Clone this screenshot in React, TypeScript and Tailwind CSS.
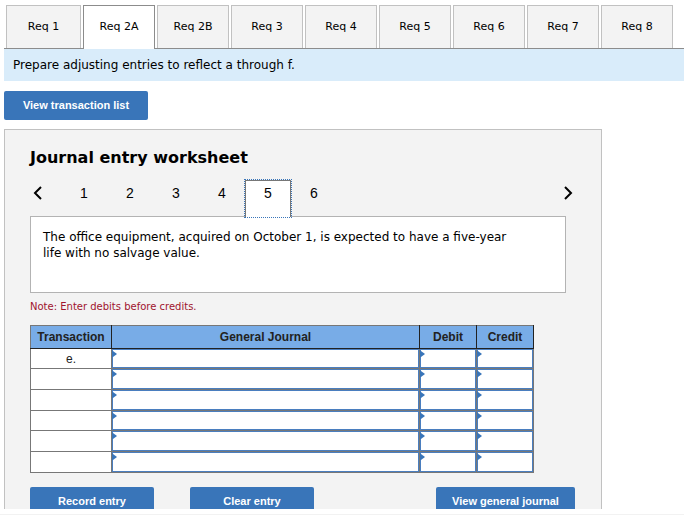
import { useState } from "react";

const REQS = ["Req 1", "Req 2A", "Req 2B", "Req 3", "Req 4", "Req 5", "Req 6", "Req 7", "Req 8"];
const PAGES = [1, 2, 3, 4, 5, 6];
const ROWS = ["e.", "", "", "", "", ""];

const buttonClass =
  "h-[29px] shrink-0 cursor-pointer rounded-xs bg-[#3975b9] text-center font-['Liberation_Sans',Arial,sans-serif] text-[11px] font-bold text-white";

function RequirementTabs() {
  const [active, setActive] = useState("Req 2A");

  return (
    <div role="tablist" className="flex gap-0.5 border-b border-[#8c8c8c] pl-0.5 text-[11px]">
      {REQS.map((req) => (
        <button
          key={req}
          type="button"
          role="tab"
          aria-selected={req === active}
          onClick={() => setActive(req)}
          className={`w-18 shrink-0 cursor-pointer border-x border-t first:w-[75px] ${
            req === active
              ? "-mb-px h-11 border-[#8c8c8c] bg-white pb-px"
              : "h-[43px] border-[#c1c1c1] bg-[#f3f3f3]"
          }`}
        >
          {req}
        </button>
      ))}
    </div>
  );
}

function Arrow({ label, path }: { label: string; path: string }) {
  return (
    <button type="button" aria-label={label} className="flex h-[26px] w-4 cursor-pointer items-center justify-center">
      <svg width="10" height="14" viewBox="0 0 10 14" fill="none" stroke="#000" strokeWidth="2">
        <path d={path} />
      </svg>
    </button>
  );
}

function Pager() {
  const [page, setPage] = useState(5);

  return (
    <div className="flex h-9 max-w-[546px] items-start">
      <Arrow label="Previous entry" path="M8 1 2 7l6 6" />
      <div className="ml-[15px] flex flex-1">
        {PAGES.map((n) => (
          <button
            key={n}
            type="button"
            onClick={() => setPage(n)}
            className={`relative w-[46px] cursor-pointer font-['Liberation_Sans',Arial,sans-serif] text-sm ${
              n === page
                ? "z-10 h-[37px] border-x border-t border-[#777] bg-white pb-3 outline-1 outline-dotted outline-[#3975b9]"
                : "h-9 pb-2.5"
            }`}
          >
            {n}
          </button>
        ))}
      </div>
      <Arrow label="Next entry" path="M2 1l6 6-6 6" />
    </div>
  );
}

function EntryCell({ label }: { label: string }) {
  return (
    <td className="relative h-px border border-[#777] p-0">
      <input
        aria-label={label}
        className="absolute inset-0 h-full w-full border border-[#4a7ebf] bg-white px-2 text-xs outline-none"
      />
      <svg className="pointer-events-none absolute left-0 top-0.5" width="5" height="6" viewBox="0 0 5 6">
        <path d="M0 0h1l4 3-4 3H0z" fill="#3975b9" />
      </svg>
    </td>
  );
}

function JournalTable() {
  return (
    <table className="w-full max-w-[504px] table-fixed border-collapse font-['Liberation_Sans',Arial,sans-serif] text-xs text-[#222]">
      <colgroup>
        <col className="w-[81px]" />
        <col />
        <col className="w-[57px]" />
        <col className="w-[57px]" />
      </colgroup>
      <thead>
        <tr className="h-[23px] bg-[#78ace7]">
          {["Transaction", "General Journal", "Debit", "Credit"].map((head) => (
            <th key={head} className="border border-[#222] border-t-[#777] p-0 font-bold first:border-l-[#777]">
              {head}
            </th>
          ))}
        </tr>
      </thead>
      <tbody>
        {ROWS.map((transaction, i) => (
          <tr key={i} className="h-[21px] bg-white nth-[3n+1]:h-5">
            <td className="border border-[#777] p-0 text-center">{transaction}</td>
            <EntryCell label={`General journal, row ${i + 1}`} />
            <EntryCell label={`Debit, row ${i + 1}`} />
            <EntryCell label={`Credit, row ${i + 1}`} />
          </tr>
        ))}
      </tbody>
    </table>
  );
}

export default function App() {
  return (
    <div className="bg-white font-['DejaVu_Sans',Verdana,sans-serif] text-black">
      <div className="pl-1 pt-[5px]">
        <RequirementTabs />
        <p className="bg-[#d9ecfa] px-[9px] py-2 text-xs">Prepare adjusting entries to reflect a through f.</p>

        <button type="button" className={`${buttonClass} mt-2.5 block w-36`}>
          View transaction list
        </button>

        <section className="mt-[9px] w-full max-w-[598px] border-x border-t border-[#c1c1c1] bg-[#f3f3f3] pl-[25px]">
          <h1 className="pb-2.5 pt-4 text-base font-bold">Journal entry worksheet</h1>
          <Pager />
          <div className="max-w-[536px]">
            <div className="min-h-[77px] border border-[#b3b3b3] bg-white p-3">
              <p className="max-w-[470px] text-xs">
                The office equipment, acquired on October 1, is expected to have a five-year life with no salvage value.
              </p>
            </div>
            <p className="mb-2.5 mt-1.5 text-[10px] leading-4 text-[#a0142d]">Note: Enter debits before credits.</p>
            <JournalTable />
          </div>
          <div className="mt-3.5 flex h-[22px] gap-9 overflow-hidden pr-[26px]">
            <button type="button" className={`${buttonClass} w-31`}>
              Record entry
            </button>
            <button type="button" className={`${buttonClass} w-31`}>
              Clear entry
            </button>
            <button type="button" className={`${buttonClass} ml-auto w-[139px]`}>
              View general journal
            </button>
          </div>
        </section>
      </div>
      <hr className="mt-[5px] border-[#f2f2f2]" />
    </div>
  );
}
